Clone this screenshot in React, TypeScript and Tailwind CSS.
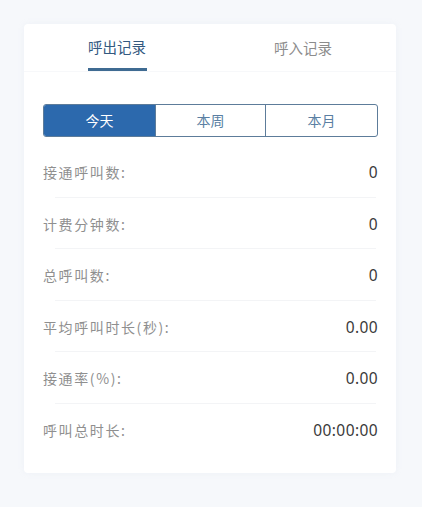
import React from "react";

const rows: [string, string][] = [
  ["接通呼叫数:", "0"],
  ["计费分钟数:", "0"],
  ["总呼叫数:", "0"],
  ["平均呼叫时长(秒):", "0.00"],
  ["接通率(%):", "0.00"],
  ["呼叫总时长:", "00:00:00"],
];

export default function App() {
  return (
    <div
      className="w-[422px] h-[507px] bg-[#f6f8fb] pt-[24px] pl-[24px] overflow-hidden"
      style={{ fontFamily: '"Noto Sans", "Noto Sans CJK SC", sans-serif' }}
    >
      <div className="w-[372px] h-[449px] bg-white rounded-[4px] shadow-[0_0_6px_rgba(180,190,210,0.12)]">
        {/* Tabs */}
        <div className="flex h-[48px] border-b border-[#f7f8fa]">
          <div className="flex-1 flex justify-center">
            <div className="flex flex-col items-center">
              <div className="h-[45px] flex items-center pt-[2px] text-[14.5px] font-normal text-[#33597f]" style={{ fontFamily: '"Noto Sans CJK SC", sans-serif' }}>
                呼出记录
              </div>
              <div className="w-[59px] h-[3px] bg-[#3f6b92]" />
            </div>
          </div>
          <div className="flex-1 flex justify-center">
            <div className="h-[45px] flex items-center pt-[2px] text-[14.5px] text-[#8c8c8c]" style={{ fontFamily: '"Noto Sans CJK SC", sans-serif' }}>
              呼入记录
            </div>
          </div>
        </div>

        <div className="pl-[19px] pr-[18px]">
          {/* Segmented */}
          <div className="mt-[32px] flex h-[33px] rounded-[3px] border border-[#5d7c9a] overflow-hidden text-[14px]" style={{ fontFamily: '"Noto Sans CJK SC", sans-serif' }}>
            <div className="w-[111px] bg-[#2c69ad] text-white flex items-center justify-center">今天</div>
            <div className="w-[110px] border-l border-[#5d7c9a] text-[#5a7fa3] flex items-center justify-center">本周</div>
            <div className="flex-1 border-l border-[#5d7c9a] text-[#5a7fa3] flex items-center justify-center">本月</div>
          </div>

          {/* Rows */}
          <div className="mt-[9px]">
            {rows.map(([label, value], i) => (
              <div key={label} className="relative h-[51.5px]">
                <div className="h-full flex items-center justify-between pt-[2px]">
                  <span
                    className="text-[14px] tracking-[1.6px] text-[#8f8f8f]"
                    style={{ fontFamily: '"Noto Sans CJK SC", sans-serif' }}
                  >
                    {label}
                  </span>
                  <span className="text-[15.5px] tracking-[0.4px] text-[#3a3a3a]">{value}</span>
                </div>
                {i < rows.length - 1 && (
                  <div className="absolute bottom-0 left-[12px] right-[2px] h-px bg-[#f3f4f6]" />
                )}
              </div>
            ))}
          </div>
        </div>
      </div>
    </div>
  );
}
